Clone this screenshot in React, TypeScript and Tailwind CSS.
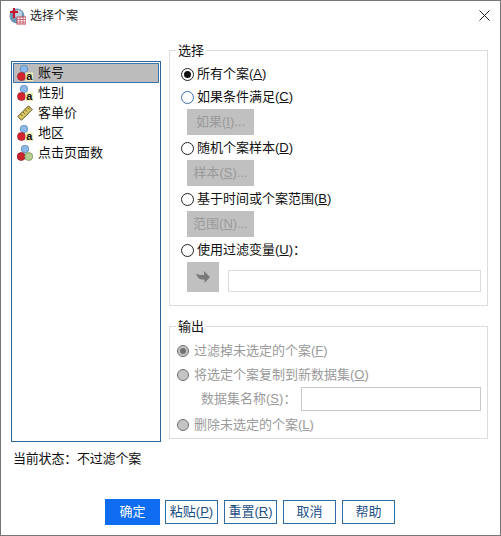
const FONT = "font-['Liberation_Sans','Noto_Sans_CJK_SC',sans-serif]";

function NominalIcon() {
  return (
    <svg width="16" height="16" viewBox="0 0 16 16" className="shrink-0">
      <circle cx="7" cy="4" r="3.800" fill="#8db8e8" stroke="#5a86b8" strokeWidth="0.800" />
      <circle cx="4.500" cy="11.500" r="4" fill="#d8222c" stroke="#8e2a30" strokeWidth="0.800" />
      <rect x="8.500" y="7.500" width="7.500" height="8.500" fill="#f2eeb0" />
      <text x="12.200" y="15" textAnchor="middle" fontSize="11" fontWeight="700" fontFamily="Liberation Sans" fill="#111">a</text>
    </svg>
  );
}

function ScaleIcon() {
  return (
    <svg width="16" height="16" viewBox="0 0 16 16" className="shrink-0">
      <circle cx="8" cy="4" r="3.800" fill="#8db8e8" stroke="#5a86b8" strokeWidth="0.800" />
      <circle cx="4.200" cy="11.500" r="4" fill="#c9242e" stroke="#8e2a30" strokeWidth="0.800" />
      <circle cx="11.800" cy="11.500" r="4" fill="#b4cf8e" stroke="#7f9a62" strokeWidth="0.800" />
    </svg>
  );
}

function RulerIcon() {
  return (
    <svg width="16" height="16" viewBox="0 0 16 16" className="shrink-0">
      <path d="M0.800 11.500 11.500 0.800l3.700 3.700L4.500 15.200z" fill="#d9c763" stroke="#5c5020" strokeWidth="1" />
      <path d="M4 9.500l1.500 1.500M6.200 7.200l1.500 1.500M8.500 5l1.500 1.500M10.700 2.800l1.500 1.500" stroke="#5c5020" strokeWidth="1" />
    </svg>
  );
}

function AppIcon() {
  return (
    <svg width="17" height="18" viewBox="0 0 17 18">
      <circle cx="8" cy="9" r="7.500" fill="#6f97b5" />
      <circle cx="9" cy="7" r="4" fill="#bcd2e2" />
      <path d="M5 1v10M1 5h8" stroke="#c8142c" strokeWidth="2.200" />
      <rect x="8" y="10" width="9" height="7" fill="#fff" stroke="#c2485a" />
      <path d="M8 12.500h9M8 15h9M11 10v7M14 10v7" stroke="#c2485a" strokeWidth="0.800" />
    </svg>
  );
}

function Radio({ checked, disabled, blue }: { checked?: boolean; disabled?: boolean; blue?: boolean }) {
  if (disabled) {
    return (
      <span className="flex h-[12px] w-[12px] shrink-0 items-center justify-center rounded-full border border-[#6f6f6f] bg-[#c4c4c4]">
        {checked && <span className="h-[6px] w-[6px] rounded-full bg-[#707070]" />}
      </span>
    );
  }
  return (
    <span
      className={
        blue
          ? "flex h-[13px] w-[13px] shrink-0 items-center justify-center rounded-full border border-[#3a6fb0] bg-white"
          : "flex h-[13px] w-[13px] shrink-0 items-center justify-center rounded-full border border-[#222] bg-white"
      }
    >
      {checked && <span className="h-[7px] w-[7px] rounded-full bg-[#111]" />}
    </span>
  );
}

function Mnemonic({ k, tail }: { k: string; tail?: string }) {
  return (
    <span>
      (<span className="underline underline-offset-1">{k}</span>){tail}
    </span>
  );
}

function GrayButton({ label, k }: { label: string; k: string }) {
  return (
    <div className="ml-[6px] flex h-[26px] w-[67px] items-center justify-center bg-[#c0c0c0] text-[13px] text-[#9a9a9a]">
      {label}
      <Mnemonic k={k} tail="..." />
    </div>
  );
}

function ChoiceRow({ children, checked, blue, className }: { children: React.ReactNode; checked?: boolean; blue?: boolean; className?: string }) {
  return (
    <div className={"flex h-[20px] items-center gap-[3px] text-[13px] text-[#111] " + (className ?? "")}>
      <Radio checked={checked} blue={blue} />
      <span>{children}</span>
    </div>
  );
}

function OutputRow({ children, checked, className }: { children: React.ReactNode; checked?: boolean; className?: string }) {
  return (
    <div className={"flex h-[20px] items-center gap-[5px] text-[13px] text-[#9a9a9a] " + (className ?? "")}>
      <Radio checked={checked} disabled />
      <span>{children}</span>
    </div>
  );
}

function FooterButton({ children, primary }: { children: React.ReactNode; primary?: boolean }) {
  return primary ? (
    <button className="-mr-[1px] flex h-[26px] w-[55px] items-center justify-center bg-[#0f6bf0] text-[13px] text-white">{children}</button>
  ) : (
    <button className="flex h-[24px] w-[53px] items-center justify-center border border-[#2f6ca6] bg-white text-[13px] text-[#1d4f86]">{children}</button>
  );
}

const variables = [
  { name: "账号", icon: <NominalIcon /> },
  { name: "性别", icon: <NominalIcon /> },
  { name: "客单价", icon: <RulerIcon /> },
  { name: "地区", icon: <NominalIcon /> },
  { name: "点击页面数", icon: <ScaleIcon /> },
];

export default function App() {
  return (
    <div className={"flex h-[536px] w-[501px] flex-col overflow-hidden border border-[#777] bg-white " + FONT}>
      {/* title bar */}
      <div className="flex h-[41px] shrink-0 items-start justify-between pl-[8px] pr-[10px] pt-[6px]">
        <div className="flex items-center gap-[4px] text-[12px] leading-[18px] text-[#222]">
          <AppIcon />
          <span>选择个案</span>
        </div>
        <svg width="11" height="11" viewBox="0 0 11 11" className="mt-[3px]">
          <path d="M0.500 0.500l10 10M10.500 0.500l-10 10" stroke="#222" strokeWidth="1" />
        </svg>
      </div>

      <div className="flex pl-[10px]">
        {/* variable list */}
        <div className="mt-[19px] h-[381px] w-[150px] shrink-0 border border-[#2b639b] p-[1px]">
          {variables.map((v, i) => (
            <div
              key={v.name}
              className={
                i === 0
                  ? "flex h-[20px] items-center gap-[5px] border border-[#3f74a8] bg-[#bcbcbc] pl-[3px] text-[13px] text-[#111]"
                  : "flex h-[20px] items-center gap-[5px] border border-transparent pl-[3px] text-[13px] text-[#111]"
              }
            >
              {v.icon}
              <span>{v.name}</span>
            </div>
          ))}
        </div>

        <div className="ml-[8px] w-[319px]">
          {/* selection group */}
          <fieldset className="h-[264px] border border-[#dcdcdc] pl-[11px] pr-[5px]">
            <legend className="-ml-[5px] px-[2px] pt-[2px] text-[13px] leading-[14px] text-[#111]">选择</legend>
            <ChoiceRow checked className="mt-[6px]">
              所有个案
              <Mnemonic k="A" />
            </ChoiceRow>
            <ChoiceRow blue className="mt-[3px]">
              如果条件满足
              <Mnemonic k="C" />
            </ChoiceRow>
            <div className="mt-[2px]">
              <GrayButton label="如果" k="I" />
            </div>
            <ChoiceRow className="mt-[3px]">
              随机个案样本
              <Mnemonic k="D" />
            </ChoiceRow>
            <div className="mt-[2px]">
              <GrayButton label="样本" k="S" />
            </div>
            <ChoiceRow className="mt-[3px]">
              基于时间或个案范围
              <Mnemonic k="B" />
            </ChoiceRow>
            <div className="mt-[2px]">
              <GrayButton label="范围" k="N" />
            </div>
            <ChoiceRow className="mt-[3px]">
              使用过滤变量
              <Mnemonic k="U" tail="：" />
            </ChoiceRow>
            <div className="ml-[6px] mt-[2px] flex items-end gap-[9px]">
              <div className="flex h-[30px] w-[32px] items-center justify-center bg-[#c0c0c0]">
                <svg width="16" height="14" viewBox="0 0 16 14">
                  <path d="M1 3.500 5 5h4V1l6 6-5.500 6V9.500H6.500C4 9.500 2.500 7 1 3.500z" fill="#7a7a7a" />
                </svg>
              </div>
              <div className="h-[22px] w-[253px] border border-[#dcdcdc]" />
            </div>
          </fieldset>

          {/* output group */}
          <fieldset className="mt-[12px] h-[121px] border border-[#dcdcdc] pl-[7px] pr-[5px]">
            <legend className="-ml-[1px] px-[2px] pt-[2px] text-[13px] leading-[14px] text-[#111]">输出</legend>
            <OutputRow checked className="mt-[7px]">
              过滤掉未选定的个案
              <Mnemonic k="F" />
            </OutputRow>
            <OutputRow className="mt-[4px]">
              将选定个案复制到新数据集
              <Mnemonic k="O" />
            </OutputRow>
            <div className="mt-[2px] flex items-center text-[13px] text-[#9a9a9a]">
              <span className="ml-[24px] w-[100px]">
                数据集名称
                <Mnemonic k="S" tail="：" />
              </span>
              <div className="h-[24px] w-[180px] border border-[#c8c8c8]" />
            </div>
            <OutputRow className="mt-[4px]">
              删除未选定的个案
              <Mnemonic k="L" />
            </OutputRow>
          </fieldset>
        </div>
      </div>

      <div className="ml-[12px] mt-[9px] text-[13px] leading-[16px] tracking-[-0.2px] text-[#111]">当前状态：不过滤个案</div>

      {/* footer buttons */}
      <div className="ml-[104px] mt-[32px] flex items-center gap-[6px]">
        <FooterButton primary>确定</FooterButton>
        <FooterButton>
          粘贴
          <Mnemonic k="P" />
        </FooterButton>
        <FooterButton>
          重置
          <Mnemonic k="R" />
        </FooterButton>
        <FooterButton>取消</FooterButton>
        <FooterButton>帮助</FooterButton>
      </div>
    </div>
  );
}
